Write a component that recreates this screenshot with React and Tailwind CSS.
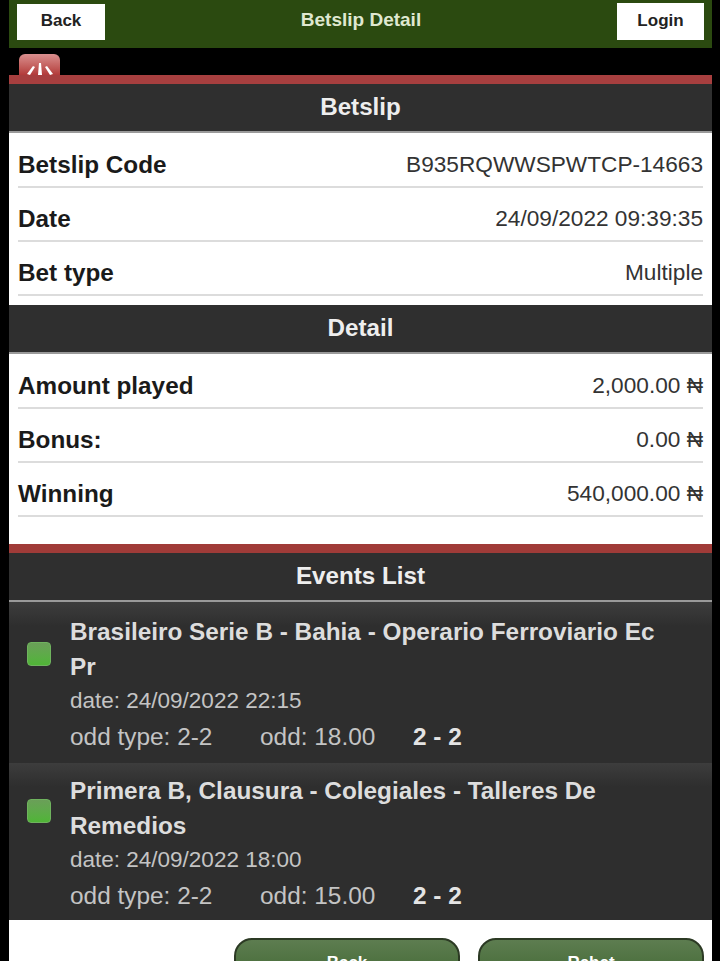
const infoRows = [
  { label: "Betslip Code", value: "B935RQWWSPWTCP-14663" },
  { label: "Date", value: "24/09/2022 09:39:35" },
  { label: "Bet type", value: "Multiple" },
];

const detailRows = [
  { label: "Amount played", value: "2,000.00 ₦" },
  { label: "Bonus:", value: "0.00 ₦" },
  { label: "Winning", value: "540,000.00 ₦" },
];

const events = [
  {
    title: "Brasileiro Serie B - Bahia - Operario Ferroviario Ec Pr",
    date: "date: 24/09/2022 22:15",
    odd: "odd: 18.00",
    box: "h-[161px] pt-[12px]",
    dot: "mt-[28px]",
  },
  {
    title: "Primera B, Clausura - Colegiales - Talleres De Remedios",
    date: "date: 24/09/2022 18:00",
    odd: "odd: 15.00",
    box: "h-[157px] pt-[10px]",
    dot: "mt-[26px]",
  },
];

function SectionHead({ title }) {
  return (
    <div className="flex h-[47px] items-center justify-center bg-[#2f2f2f] text-[24.2px] font-bold text-[#eeeeee]">
      {title}
    </div>
  );
}

function Row({ label, value }) {
  return (
    <div className="mx-[9px] flex h-[54px] items-center justify-between border-b-2 border-[#dcdcdc] pt-[10px]">
      <span className="text-[24.3px] font-bold text-[#1a1a1a]">{label}</span>
      <span className="text-[22.65px] text-[#333333]">{value}</span>
    </div>
  );
}

function EventItem({ event }) {
  return (
    <div
      className={`flex bg-gradient-to-b from-[#3d3d3d] from-0% to-[#2e2e2e] to-[15%] pl-[18px] pr-[40px] ${event.box}`}
    >
      <div
        className={`h-[24px] w-[24px] shrink-0 rounded-[4px] border border-[#6fb35e] bg-gradient-to-b from-[#6a9f58] to-[#4fb536] ${event.dot}`}
      />
      <div className="ml-[19px] min-w-0">
        <div className="text-[24.35px] font-bold leading-[35px] text-[#dddddd]">{event.title}</div>
        <div className="mt-[2px] text-[22.5px] leading-[30px] text-[#c4c4c4]">{event.date}</div>
        <div className="mt-[3px] flex text-[24.4px] leading-[36px] text-[#c4c4c4]">
          <span className="w-[190px]">odd type: 2-2</span>
          <span className="w-[153px]">{event.odd}</span>
          <span className="font-bold text-[#e4e4e4]">2 - 2</span>
        </div>
      </div>
    </div>
  );
}

export default function App() {
  return (
    <div className="h-[961px] w-[720px] overflow-hidden bg-black font-['Liberation_Sans',Arial,sans-serif]">
      <div className="ml-[9px] w-[703px]">
        <header className="flex h-[48px] items-center justify-between bg-[#2b4a10] px-[8px] pb-[8px] pt-[3px]">
          <button className="h-[36px] w-[88px] bg-white pb-[2px] text-[17px] font-bold text-[#222222]">Back</button>
          <span className="mb-[2px] text-[19px] font-bold text-[#dfe8d0]">Betslip Detail</span>
          <button className="h-[37px] w-[87px] bg-white pb-[2px] text-[17px] font-bold text-[#222222]">Login</button>
        </header>

        <div className="flex h-[27px] items-end pl-[10px]">
          <div className="flex h-[21px] w-[41px] items-end justify-center overflow-hidden rounded-t-[6px] bg-gradient-to-b from-[#d98f8f] to-[#b23a3a]">
            <svg viewBox="0 0 26 12" className="h-[12px] w-[26px]" fill="white">
              <polygon points="0,11 6,3 8,4 3,12" />
              <polygon points="12,0 14,0 15,12 11,12" />
              <polygon points="18,4 20,3 26,11 23,12" />
            </svg>
          </div>
        </div>

        <div className="h-[9px] bg-[#a73f3f]" />
        <SectionHead title="Betslip" />
        <div className="h-[174px] border-t-2 border-[#9a9a9a] bg-white pt-px">
          {infoRows.map((row) => (
            <Row key={row.label} {...row} />
          ))}
        </div>

        <SectionHead title="Detail" />
        <div className="h-[192px] border-t-2 border-[#9a9a9a] bg-white pt-px">
          {detailRows.map((row) => (
            <Row key={row.label} {...row} />
          ))}
        </div>

        <div className="h-[9px] bg-[#a03b38]" />
        <SectionHead title="Events List" />
        <div className="h-[2px] bg-[#9a9a9a]" />
        {events.map((event) => (
          <EventItem key={event.title} event={event} />
        ))}

        <div className="flex h-[60px] justify-end gap-[18px] bg-white pr-[8px] pt-[18px]">
          <button className="h-[50px] w-[226px] rounded-[18px] border-2 border-[#2c3a24] bg-gradient-to-b from-[#5d7d50] to-[#3f6530] text-[17px] font-bold text-white">Back</button>
          <button className="h-[50px] w-[226px] rounded-[18px] border-2 border-[#2c3a24] bg-gradient-to-b from-[#5d7d50] to-[#3f6530] text-[17px] font-bold text-white">Rebet</button>
        </div>
      </div>
    </div>
  );
}
